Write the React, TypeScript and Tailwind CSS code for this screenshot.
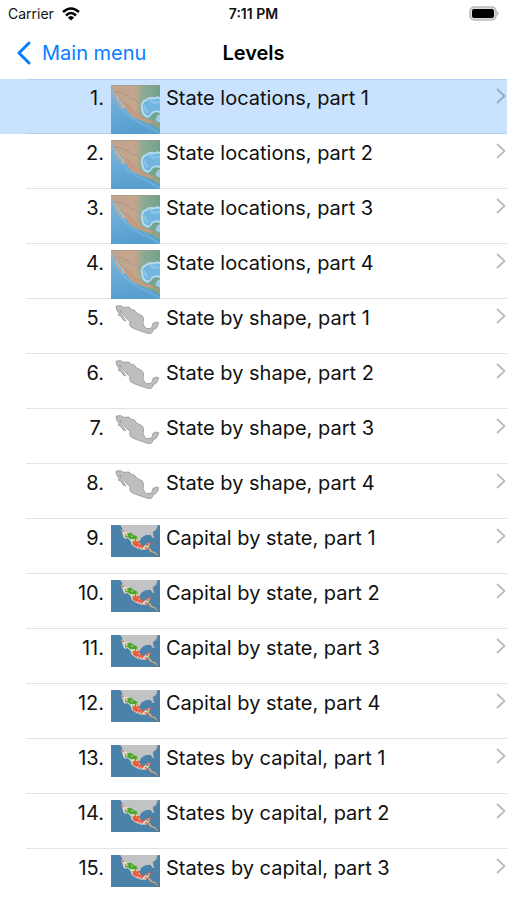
import React from "react";

type Kind = "terrain" | "shape" | "capitals";

const groups: { title: string; kind: Kind; parts: number }[] = [
  { title: "State locations", kind: "terrain", parts: 4 },
  { title: "State by shape", kind: "shape", parts: 4 },
  { title: "Capital by state", kind: "capitals", parts: 4 },
  { title: "States by capital", kind: "capitals", parts: 3 },
];

const levels = groups.flatMap((g) =>
  Array.from({ length: g.parts }, (_, i) => ({ label: `${g.title}, part ${i + 1}`, kind: g.kind })),
);

function TerrainMap() {
  return (
    <svg viewBox="0 0 147 147" className="block size-[49px]" aria-hidden="true">
      <defs>
        <linearGradient id="sea" x1="0" y1="0" x2="0.2" y2="1">
          <stop offset="0" stopColor="#7db9df" />
          <stop offset="1" stopColor="#579fcf" />
        </linearGradient>
        <linearGradient id="land" x1="0" y1="0" x2="1" y2="0">
          <stop offset="0" stopColor="#c2a490" />
          <stop offset="0.48" stopColor="#c6a68c" />
          <stop offset="0.64" stopColor="#8eac94" />
          <stop offset="1" stopColor="#71a18b" />
        </linearGradient>
      </defs>
      <path d="M0 0H147V147H0Z" fill="url(#sea)" />
      <path d="M0 10L14 42L34 72L54 94L88 115L112 124L147 145" fill="none" stroke="#8ac3e5" strokeWidth="6" opacity=".4" />
      <path d="M1 0H147V138L130 124L110 116L90 107L65 95L52 82L48 74L39 66L33 54L23 43L19 31L14 27L18 42L28 57L37 73L33 73L20 56L12 42L7 24Z" fill="url(#land)" />
      <path d="M36 54L48 55L62 66L74 82L90 94L105 102L119 106L132 111L121 115L91 105L69 94L55 81L48 70Z" fill="#c69a80" />
      <path d="M160 42L138 37L130 40L115 39L107 44L98 49L92 60L94 77L99 89L108 95L119 93L124 83L136 79L160 84Z" fill="#72b6e0" stroke="#b4dcf2" strokeWidth="6" strokeLinejoin="round" />
      <path d="M116 43L126 53L147 51M100 66L108 80" fill="none" stroke="#93cbe9" strokeWidth="8" strokeLinecap="round" opacity=".7" />
      <path d="M120 92L127 84L138 82L140 91L133 102L119 103L113 99Z" fill="#73a58c" />
      <path d="M140 90L147 88V113L135 107L134 101Z" fill="#9fcde4" />
      <path d="M120 112L136 110L147 119V131L131 122Z" fill="#93a184" />
      <path d="M9 21L31 23L39 31L51 29L61 43L73 42L92 61" fill="none" stroke="#a28f82" strokeWidth="2" />
      <path d="M35 26L39 51L53 61M51 30L50 49L68 70M70 45L67 59L84 75M40 0V23M68 0L75 35M99 0L102 29M85 12L121 16M122 0L130 36" fill="none" stroke="#9c9787" strokeWidth="1" opacity=".5" />
      <path d="M18 31L24 46L35 60L39 70" fill="none" stroke="#b4d8e5" strokeWidth="3" />
      <path d="M20 29L26 42L35 55" fill="none" stroke="#8499a1" strokeWidth="2" />
      <path d="M0 1H147" stroke="#9b9585" strokeWidth="2" />
    </svg>
  );
}

function MexicoShape() {
  return (
    <svg viewBox="0 0 147 96" className="block h-8 w-[49px]" aria-hidden="true">
      <path
        d="M15 4L22 2L29 2L38 7L54 6L62 14L69 14L77 24L83 27L94 33L98 42L96 56L101 66L107 71L119 70L123 65L126 55L137 51L143 53L139 65L134 71L125 74L126 79L119 86L106 84L92 79L74 73L60 66L56 59L57 49L48 42L39 31L31 20L27 15L29 24L36 34L44 48L38 46L29 34L22 31L24 25L17 15Z"
        fill="#bebebe" stroke="#858585" strokeWidth="2" strokeLinejoin="round"
      />
      <path d="M13 50L15 51M27 57L29 58" stroke="#cfcfcf" strokeWidth="2" />
    </svg>
  );
}

function CapitalsMap() {
  return (
    <svg viewBox="0 0 147 96" className="block h-8 w-[49px]" aria-hidden="true">
      <path d="M0 0H147V96H0Z" fill="#4b82aa" />
      <path d="M28 0H143L138 14L129 22L127 32L131 39L125 38L118 29L103 31L91 38L86 49L78 40L65 33L51 25L37 16Z" fill="#c2c3c5" />
      <path d="M35 13L45 21L55 22L63 30L73 32L83 41L84 52L89 62L98 65L106 57L117 54L114 64L108 73L92 74L76 69L62 59L59 48L49 38L40 29L45 43L38 38L31 16Z" fill="#d9dcc9" />
      <path d="M48 24L60 23L68 30L77 34L82 43L74 46L68 42L61 45L54 39L44 34L51 31Z" fill="#4ea333" />
      <path d="M63 49L72 45L85 49L89 57L98 65L91 72L76 66L66 59Z" fill="#ed5547" />
      <g fill="#f25e4c">
        <circle cx="36" cy="19" r="3" />
        <circle cx="43" cy="31" r="3" />
        <circle cx="78" cy="52" r="5" />
        <circle cx="90" cy="64" r="5" />
        <circle cx="109" cy="59" r="4" />
        <circle cx="117" cy="55" r="3" />
        <circle cx="105" cy="70" r="4" />
      </g>
      <g fill="#9bd34e">
        <circle cx="49" cy="30" r="3" />
        <circle cx="63" cy="34" r="3" />
        <circle cx="78" cy="42" r="3" />
        <circle cx="65" cy="51" r="3" />
        <circle cx="85" cy="56" r="3" />
        <circle cx="113" cy="65" r="3" />
      </g>
      <path d="M40 31L48 42M60 44L78 47M79 65L91 70M101 72L114 68" fill="none" stroke="#fff4db" strokeWidth="4" strokeDasharray="3 5" />
      <path d="M108 72L118 66L124 77L133 79L141 90L147 95L139 94L129 86L119 83Z" fill="#aaa99e" stroke="#576774" strokeWidth="2" />
      <path d="M121 51L135 50L145 57M141 0L136 16L126 22L133 36" fill="none" stroke="#657c8d" strokeWidth="3" />
    </svg>
  );
}

const pictures: Record<Kind, () => React.ReactElement> = {
  terrain: TerrainMap,
  shape: MexicoShape,
  capitals: CapitalsMap,
};

function StatusBar() {
  return (
    <div className="grid h-[27px] grid-cols-3 items-center px-2 text-sm leading-5">
      <div className="flex items-center gap-2">
        <span>Carrier</span>
        <svg viewBox="0 0 18 14" className="h-3.5 w-[18px]" aria-label="Wi-Fi">
          <path d="M1 5Q9 -2 17 5M4 8.500Q9 3.500 14 8.500" fill="none" stroke="#000" strokeWidth="2.500" />
          <path d="M5.800 10.500Q9 7.500 12.200 10.500L9 13.500Z" />
        </svg>
      </div>
      <time className="text-center font-semibold">7:11 PM</time>
      <svg viewBox="0 0 31 15" className="h-[15px] w-[31px] justify-self-end" aria-label="Battery">
        <rect x="2" y="1" width="26" height="13" rx="4" fill="#ddd" stroke="#bcbcbc" strokeWidth="1.500" />
        <rect x="4" y="3" width="22" height="9" rx="2" />
        <path d="M29 5Q32 7.500 29 10Z" fill="#b5b5b5" />
      </svg>
    </div>
  );
}

export default function App() {
  return (
    <div className="flex h-screen flex-col overflow-hidden bg-white font-[Inter,'Liberation_Sans',sans-serif] text-[#111]">
      <StatusBar />
      <header className="grid h-[51px] shrink-0 grid-cols-[1fr_auto_1fr] items-center px-4 text-xl">
        <button type="button" className="flex items-center gap-2.5 justify-self-start text-[#087dff]">
          <svg viewBox="0 0 16 24" className="h-6 w-4" fill="none" stroke="currentColor" strokeWidth="3" strokeLinecap="round" strokeLinejoin="round" aria-hidden="true">
            <path d="M13 2L3 12L13 22" />
          </svg>
          Main menu
        </button>
        <h1 className="font-semibold text-black">Levels</h1>
      </header>
      <main className="min-h-0 flex-1 overflow-y-auto pt-px [scrollbar-width:none]">
        <ol>
          {levels.map(({ label, kind }, i) => {
            const Picture = pictures[kind];
            const selected = i === 0;
            return (
              <li key={label} className={selected ? "bg-[#c9e2fd]" : "bg-white"}>
                <button type="button" aria-current={selected} className="block h-[55px] w-full pl-[26px] text-left">
                  <span
                    className={
                      selected
                        ? "flex h-full items-start border-y border-[#b0d2f4]"
                        : "flex h-full items-start border-b border-[#e3e3e5] pt-px"
                    }
                  >
                    <span className="mt-1 w-[78px] text-right text-xl leading-7">{i + 1}.</span>
                    <span className="mt-[5px] ml-[7px] w-[49px] shrink-0">
                      <Picture />
                    </span>
                    <span className="mt-1 ml-1.5 flex-1 text-xl leading-7">{label}</span>
                    <svg viewBox="0 0 10 16" className="mt-2 mr-px h-4 w-2.5" fill="none" stroke={selected ? "#94adc8" : "#bcbcc0"} strokeWidth="1.800" aria-hidden="true">
                      <path d="M1 1L8.500 8L1 15" />
                    </svg>
                  </span>
                </button>
              </li>
            );
          })}
        </ol>
      </main>
    </div>
  );
}
